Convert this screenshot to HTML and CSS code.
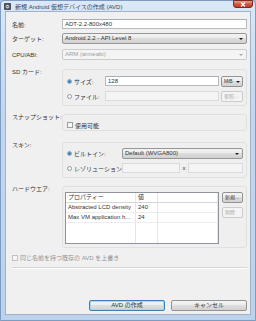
FILE: index.html
```html
<!DOCTYPE html>
<html lang="ja">
<head>
  <meta charset="UTF-8">
  <title>新規 Android 仮想デバイスの作成 (AVD)</title>
  <link rel="stylesheet" href="styles.css">
</head>
<body>

  <div class="window">
    <!-- Title bar -->
    <div class="titlebar">
      <span class="app-icon">
        <svg width="7" height="7" viewBox="0 0 7 7">
          <rect x="0" y="0" width="7" height="7" rx="1" fill="#4a4f57"/>
          <circle cx="3.5" cy="3.6" r="1.9" fill="#d9dde2"/>
          <rect x="2.3" y="3.2" width="2.4" height="1" fill="#4a4f57"/>
        </svg>
      </span>
      <span class="title">新規 Android 仮想デバイスの作成 (AVD)</span>
      <span class="close-btn">
        <svg width="6" height="5" viewBox="0 0 6 5">
          <path d="M1 0.5 L5 4.5 M5 0.5 L1 4.5" stroke="#fff" stroke-width="1.2"/>
        </svg>
      </span>
    </div>

    <div class="client">
      <div class="form">

        <div class="row row-name">
          <div class="lbl">名前:</div>
          <div class="ctl"><div class="textbox">ADT-2.2-800x480</div></div>
        </div>

        <div class="row row-target">
          <div class="lbl">ターゲット:</div>
          <div class="ctl"><div class="combo">Android 2.2 - API Level 8<span class="arrow"></span></div></div>
        </div>

        <div class="row row-cpu">
          <div class="lbl">CPU/ABI:</div>
          <div class="ctl"><div class="combo disabled">ARM (armeabi)<span class="arrow"></span></div></div>
        </div>

        <div class="row row-sd">
          <div class="lbl lbl-top">SD カード:</div>
          <div class="ctl">
            <div class="group group-sd">
              <div class="opt-row">
                <span class="radio on"></span>
                <span class="opt-lbl">サイズ:</span>
                <div class="textbox grow">128</div>
                <div class="btn small">MiB<span class="arrow"></span></div>
              </div>
              <div class="opt-row">
                <span class="radio"></span>
                <span class="opt-lbl">ファイル:</span>
                <div class="textbox grow disabled"></div>
                <div class="btn small disabled">参照...</div>
              </div>
            </div>
          </div>
        </div>

        <div class="row row-snap">
          <div class="lbl lbl-top">スナップショット:</div>
          <div class="ctl">
            <div class="group group-snap">
              <div class="opt-row">
                <span class="check"></span>
                <span class="opt-text">使用可能</span>
              </div>
            </div>
          </div>
        </div>

        <div class="row row-skin">
          <div class="lbl lbl-top">スキン:</div>
          <div class="ctl">
            <div class="group group-skin">
              <div class="opt-row">
                <span class="radio on"></span>
                <span class="opt-lbl wide">ビルトイン:</span>
                <div class="combo grow">Default (WVGA800)<span class="arrow"></span></div>
              </div>
              <div class="opt-row">
                <span class="radio"></span>
                <span class="opt-lbl wide">レゾリューション:</span>
                <div class="textbox res disabled"></div>
                <span class="times">x</span>
                <div class="textbox grow disabled"></div>
              </div>
            </div>
          </div>
        </div>

        <div class="row row-hw">
          <div class="lbl lbl-top">ハードウエア:</div>
          <div class="ctl">
            <div class="group group-hw">
              <div class="table">
                <div class="cell head">プロパティー</div>
                <div class="cell head">値</div>
                <div class="cell head"></div>
                <div class="cell">Abstracted LCD density</div>
                <div class="cell">240</div>
                <div class="cell"></div>
                <div class="cell">Max VM application h...</div>
                <div class="cell">24</div>
                <div class="cell"></div>
                <div class="cell empty"></div>
                <div class="cell empty"></div>
                <div class="cell empty"></div>
              </div>
              <div class="side-btns">
                <div class="btn small">新規...</div>
                <div class="btn small disabled">削除</div>
              </div>
            </div>
          </div>
        </div>

        <div class="overwrite">
          <span class="check disabled"></span>
          <span class="opt-text disabled-text">同じ名前を持つ既存の AVD を上書き</span>
        </div>

        <div class="separator"></div>

        <div class="actions">
          <div class="btn action default">AVD の作成</div>
          <div class="btn action">キャンセル</div>
        </div>

      </div>
    </div>
  </div>

</body>
</html>
```

FILE: styles.css
```css
* {
  margin: 0;
  padding: 0;
  box-sizing: border-box;
}

body {
  width: 256px;
  height: 321px;
  overflow: hidden;
  font-family: "Liberation Sans", "Noto Sans CJK JP", sans-serif;
  font-size: 6px;
  color: #333;
  background: #a9c0da;
}

.window {
  width: 256px;
  height: 321px;
  display: flex;
  flex-direction: column;
  background: linear-gradient(180deg, #dae8f7 0%, #c3d8ee 30%, #bcd2ea 100%);
  border: 1px solid #7d9cbf;
  border-radius: 4px 4px 0 0;
}

/* Title bar */
.titlebar {
  height: 10px;
  display: flex;
  align-items: center;
  position: relative;
  padding-left: 3px;
}

.app-icon {
  display: flex;
  width: 7px;
  height: 7px;
}

.title {
  margin-left: 4px;
  font-size: 6px;
  color: #3a4656;
  white-space: nowrap;
}

.close-btn {
  position: absolute;
  right: 2px;
  top: -1px;
  width: 20px;
  height: 8px;
  display: flex;
  align-items: center;
  justify-content: center;
  background: linear-gradient(180deg, #e8a493 0%, #d35a42 50%, #c03a22 100%);
  border: 1px solid #7a2c20;
  border-radius: 0 0 3px 3px;
}

/* Client area */
.client {
  flex: 1;
  margin: 0 4px 5px 4px;
  background: #f0f0f0;
  border: 1px solid #9fb2c9;
  display: flex;
}

.form {
  flex: 1;
  display: flex;
  flex-direction: column;
  padding: 7px 4px 3px 6px;
}

.row {
  display: flex;
  align-items: center;
}

.row-target { margin-top: 4px; }
.row-cpu { margin-top: 5px; }
.row-sd { margin-top: 9px; align-items: flex-start; }
.row-snap { margin-top: 8px; align-items: flex-start; }
.row-skin { margin-top: 11px; align-items: flex-start; }
.row-hw { margin-top: 8px; align-items: flex-start; }

.lbl {
  width: 50px;
  flex-shrink: 0;
  white-space: nowrap;
}

.lbl-top {
  margin-top: -2px;
}

.ctl {
  width: 185px;
}

/* Inputs */
.textbox {
  height: 10px;
  line-height: 8px;
  padding: 0 2px;
  background: #fff;
  border: 1px solid #b5b8bd;
  border-top-color: #a9aeb6;
  white-space: nowrap;
  overflow: hidden;
}

.textbox.disabled {
  background: #f4f4f4;
  border-color: #d8dadd;
}

.combo {
  position: relative;
  height: 11px;
  line-height: 9px;
  padding: 0 2px;
  border: 1px solid #979797;
  border-radius: 2px;
  background: linear-gradient(180deg, #f3f3f3 0%, #ebebeb 45%, #dddddd 50%, #d0d0d0 100%);
  white-space: nowrap;
}

.combo.disabled {
  background: #f4f4f4;
  border-color: #c9cbce;
  color: #a0a0a0;
}

.arrow {
  position: absolute;
  right: 3px;
  top: 4px;
  width: 0;
  height: 0;
  border-left: 2px solid transparent;
  border-right: 2px solid transparent;
  border-top: 2px solid #1c1c1c;
}

.combo.disabled .arrow {
  border-top-color: #a6a6a6;
}

.grow {
  flex: 1;
}

/* Group boxes */
.group {
  border: 1px solid #e0e0e0;
  border-radius: 3px;
  background: #efefef;
  display: flex;
  flex-direction: column;
}

.group-sd {
  height: 37px;
  padding: 6px 3px 0 4px;
  gap: 5px;
}

.group-snap {
  height: 17px;
  padding: 5px 4px 0 4px;
}

.group-skin {
  height: 36px;
  padding: 5px 3px 0 4px;
  gap: 5px;
}

.group-hw {
  height: 62px;
  padding: 5px 3px 0 2px;
  flex-direction: row;
  align-items: flex-start;
}

.opt-row {
  display: flex;
  align-items: center;
  height: 10px;
}

.radio {
  width: 5px;
  height: 5px;
  border-radius: 50%;
  border: 1px solid #9a9ea1;
  background: #f2f2f2;
  flex-shrink: 0;
  display: flex;
  align-items: center;
  justify-content: center;
}

.radio.on::after {
  content: "";
  width: 3px;
  height: 3px;
  border-radius: 50%;
  background: #2f7fc5;
}

.opt-lbl {
  width: 33px;
  padding-left: 2px;
  white-space: nowrap;
}

.opt-lbl.wide {
  width: 50px;
}

.check {
  width: 6px;
  height: 6px;
  border: 1px solid #9a9ea1;
  background: #f6f6f6;
  flex-shrink: 0;
}

.check.disabled {
  border-color: #c2c2c2;
}

.opt-text {
  padding-left: 2px;
  white-space: nowrap;
}

.disabled-text {
  color: #949494;
}

.textbox.res {
  width: 58px;
}

.times {
  width: 8px;
  text-align: center;
}

/* Buttons */
.btn {
  position: relative;
  border: 1px solid #939393;
  border-radius: 2px;
  background: linear-gradient(180deg, #f4f4f4 0%, #ececec 45%, #dedede 50%, #d2d2d2 100%);
  text-align: center;
  white-space: nowrap;
}

.btn.small {
  width: 22px;
  height: 11px;
  line-height: 9px;
  margin-left: 2px;
  font-size: 5px;
  text-align: left;
  padding-left: 2px;
}

.btn.small.disabled {
  background: #f4f4f4;
  border-color: #cbcbcb;
  color: #a8a8a8;
}

.btn .arrow {
  right: 2px;
}

/* Hardware table */
.table {
  width: 155px;
  height: 52px;
  display: grid;
  grid-template-columns: 70px 22px 1fr;
  grid-template-rows: repeat(3, 10px) 1fr;
  background: #fff;
  border: 1px solid #8f949c;
  align-content: start;
}

.cell {
  padding-left: 2px;
  line-height: 9px;
  border-right: 1px solid #e6e6e6;
  border-bottom: 1px solid #ececec;
  white-space: nowrap;
  overflow: hidden;
}

.cell.head {
  border-bottom-color: #d5d5d5;
}

.cell.empty {
  border-bottom: none;
}

.side-btns {
  display: flex;
  flex-direction: column;
  gap: 4px;
  margin-left: 1px;
}

.side-btns .btn.small {
  width: 21px;
}

/* Overwrite checkbox */
.overwrite {
  display: flex;
  align-items: center;
  margin-top: 5px;
}

.separator {
  margin-top: 5px;
  height: 2px;
  border-top: 1px solid #d5d5d5;
  border-bottom: 1px solid #fff;
}

.actions {
  margin-top: auto;
  display: flex;
  justify-content: flex-end;
  gap: 6px;
}

.btn.action {
  width: 76px;
  height: 11px;
  line-height: 9px;
}

.btn.action.default {
  border-color: #3c7fb1;
  box-shadow: inset 0 0 0 1px #a7d7f1;
}
```
